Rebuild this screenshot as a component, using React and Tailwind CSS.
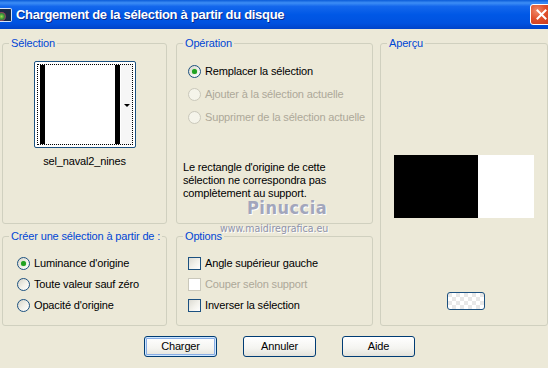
import React from 'react';

const Radio = ({ checked, disabled }) => (
    <span
        className={`w-[13px] h-[13px] shrink-0 rounded-full border flex items-center justify-center ${
            disabled
                ? 'border-[#CAC8BB] bg-[#F5F4EA]'
                : 'border-[#1C5180] bg-[linear-gradient(135deg,#D6D4C9_0%,#F2F1EA_55%,#FFFFFF_100%)]'
        }`}
    >
        {checked && <span className="w-[5px] h-[5px] rounded-full bg-[#21A121] shadow-[0_0_1px_#5CCB5C]"></span>}
    </span>
);

const Check = ({ disabled }) => (
    <span
        className={`w-[13px] h-[13px] shrink-0 border ${
            disabled
                ? 'border-[#CAC8BB] bg-white'
                : 'border-[#1C5180] bg-[linear-gradient(135deg,#DCDBD3_0%,#F3F2EC_55%,#FFFFFF_100%)]'
        }`}
    ></span>
);

const Group = ({ title, className, children }) => (
    <fieldset className={`border border-[#D0D0BF] rounded-[3px] px-0 ${className}`}>
        <legend className="ml-[6px] px-[2px] text-[#0046D5] leading-[13px] whitespace-nowrap">{title}</legend>
        {children}
    </fieldset>
);

const XpButton = ({ label, focused }) => (
    <button
        className={`w-[73px] h-[21px] rounded-[3px] border border-[#003C74] bg-[linear-gradient(to_bottom,#FFFFFF_0%,#F4F4F0_60%,#E3E2DA_100%)] text-black leading-none ${
            focused ? 'shadow-[inset_0_0_0_1px_#CEE7FF,inset_0_0_0_2px_#89ADE4]' : ''
        }`}
    >
        {label}
    </button>
);

export default function App() {
    return (
        <div className="relative w-[548px] h-[368px] overflow-hidden bg-[#ECE9D8] text-[11px] tracking-[-0.15px] text-black font-['Liberation_Sans',Arial,sans-serif]">
            {/* Title bar */}
            <div className="h-[29px] flex items-center bg-[linear-gradient(to_bottom,#0A5BD8_0%,#3D8EF5_10%,#1467EC_22%,#0058E6_50%,#0052E0_80%,#0043C9_100%)]">
                <div className="w-[12px] h-[14px] mr-[4px] rounded-r-[2px] bg-[#1B2B45] relative overflow-hidden border border-[#D8E4F8] border-l-0">
                    <span className="absolute left-[-3px] top-[3px] w-[9px] h-[9px] rounded-full bg-[radial-gradient(circle,#9CE048_0%,#2F8A3A_45%,#B82A6A_75%,#222_100%)]"></span>
                </div>
                <span className="text-white font-bold text-[13px] tracking-[-0.3px] [text-shadow:1px_1px_0_#0A2A8A]">
                    Chargement de la sélection à partir du disque
                </span>
                <div className="ml-auto mr-[-4px] w-[22px] h-[21px] rounded-[3px] border border-white bg-[radial-gradient(circle_at_30%_30%,#F08A6A_0%,#E0502A_45%,#C7361A_100%)] flex items-center justify-center">
                    <svg width="11" height="11" viewBox="0 0 11 11">
                        <path d="M1.5 1.5 L9.5 9.5 M9.5 1.5 L1.5 9.5" stroke="white" strokeWidth="2" strokeLinecap="square" />
                    </svg>
                </div>
            </div>

            {/* Body */}
            <div className="flex pt-[8px] pl-[2px]">
                <div className="flex flex-col w-[165px] gap-[6px]">
                    <Group title="Sélection" className="h-[187px] flex flex-col items-center">
                        <div className="mt-[11px] w-[102px] h-[87px] rounded-[2px] border border-[#1C5180] bg-white p-[2px]">
                            <div className="relative w-full h-full border border-dotted border-black bg-[#F6F6F6] flex">
                                <div className="w-[83px] h-full bg-white flex justify-between pl-[2px] pr-[1px]">
                                    <div className="w-[5px] h-full bg-black"></div>
                                    <div className="w-[5px] h-full bg-black"></div>
                                </div>
                                <span className="absolute right-[2px] top-[39px] w-0 h-0 border-l-[3px] border-r-[3px] border-t-[3px] border-l-transparent border-r-transparent border-t-black"></span>
                            </div>
                        </div>
                        <span className="mt-[5px]">sel_naval2_nines</span>
                    </Group>
                    <Group title="Créer une sélection à partir de :" className="h-[96px]">
                        <div className="flex flex-col gap-[8px] pl-[14px] pt-[14px]">
                            <label className="flex items-center gap-[4px] h-[13px]">
                                <Radio checked />
                                <span>Luminance d'origine</span>
                            </label>
                            <label className="flex items-center gap-[4px] h-[13px]">
                                <Radio />
                                <span>Toute valeur sauf zéro</span>
                            </label>
                            <label className="flex items-center gap-[4px] h-[13px]">
                                <Radio />
                                <span>Opacité d'origine</span>
                            </label>
                        </div>
                    </Group>
                </div>

                <div className="flex flex-col w-[197px] ml-[9px] gap-[6px]">
                    <Group title="Opération" className="h-[187px]">
                        <div className="flex flex-col gap-[10px] pl-[11px] pt-[15px]">
                            <label className="flex items-center gap-[4px] h-[13px]">
                                <Radio checked />
                                <span>Remplacer la sélection</span>
                            </label>
                            <label className="flex items-center gap-[4px] h-[13px] text-[#ACA899]">
                                <Radio disabled />
                                <span>Ajouter à la sélection actuelle</span>
                            </label>
                            <label className="flex items-center gap-[4px] h-[13px] text-[#ACA899]">
                                <Radio disabled />
                                <span>Supprimer de la sélection actuelle</span>
                            </label>
                        </div>
                        <p className="pl-[6px] pt-[37px] leading-[13px]">
                            Le rectangle d'origine de cette
                            <br />
                            sélection ne correspondra pas
                            <br />
                            complètement au support.
                        </p>
                    </Group>
                    <Group title="Options" className="h-[96px]">
                        <div className="flex flex-col gap-[8px] pl-[11px] pt-[14px]">
                            <label className="flex items-center gap-[4px] h-[13px]">
                                <Check />
                                <span>Angle supérieur gauche</span>
                            </label>
                            <label className="flex items-center gap-[4px] h-[13px] text-[#ACA899]">
                                <Check disabled />
                                <span>Couper selon support</span>
                            </label>
                            <label className="flex items-center gap-[4px] h-[13px]">
                                <Check />
                                <span>Inverser la sélection</span>
                            </label>
                        </div>
                    </Group>
                </div>

                <div className="w-[168px] ml-[7px]">
                    <Group title="Aperçu" className="h-[289px] flex flex-col items-center">
                        <div className="mt-[105px] flex h-[63px]">
                            <div className="w-[84px] h-full bg-black"></div>
                            <div className="w-[56px] h-full bg-white"></div>
                        </div>
                        <div className="mt-[74px] ml-[3px] w-[38px] h-[18px] rounded-[3px] border border-[#1C5180] bg-[repeating-conic-gradient(#FFFFFF_0%_25%,#E8E8E8_0%_50%)] bg-[length:8px_8px]"></div>
                    </Group>
                </div>
            </div>

            {/* Buttons */}
            <div className="flex gap-[26px] pl-[144px] mt-[10px]">
                <XpButton label="Charger" focused />
                <XpButton label="Annuler" />
                <XpButton label="Aide" />
            </div>

            {/* Watermark */}
            <div className="absolute left-[247px] top-[194px] text-[18px] tracking-[0.5px] font-bold text-[#A2A6BC] font-['DejaVu_Sans_Condensed','DejaVu_Sans',sans-serif] [text-shadow:1px_1px_0_#FFFFFF]">
                Pinuccia
            </div>
            <div className="absolute left-[220px] top-[221px] text-[10.5px] tracking-[0px] text-[#8E92AA] font-['DejaVu_Sans_Condensed','DejaVu_Sans',sans-serif] [text-shadow:1px_1px_0_#FFFFFF]">
                www.maidiregrafica.eu
            </div>
        </div>
    );
}
